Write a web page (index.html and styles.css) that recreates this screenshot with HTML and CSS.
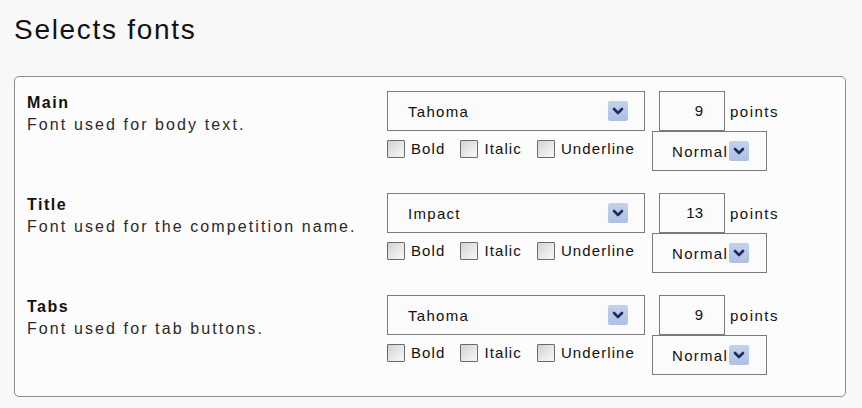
FILE: index.html
```html
<!DOCTYPE html>
<html>
<head>
<meta charset="utf-8">
<link rel="stylesheet" href="styles.css">
</head>
<body>
<h1 class="page-title">Selects fonts</h1>
<div class="panel">
  <div class="font-row">
    <div class="font-info">
      <div class="font-name">Main</div>
      <div class="font-desc">Font used for body text.</div>
    </div>
    <div class="font-controls">
      <div class="controls-top">
        <div class="select family"><span class="select-text">Tahoma</span><span class="arrow"><svg viewBox="0 0 20 20" width="20" height="20"><path d="M6 8 L10 12 L14 8" fill="none" stroke="#1d2d5c" stroke-width="2.6" stroke-linecap="round" stroke-linejoin="round"/></svg></span></div>
        <div class="size-box">9</div>
        <span class="unit">points</span>
      </div>
      <div class="controls-bottom">
        <div class="checks">
          <label class="check"><span class="box"></span>Bold</label>
          <label class="check"><span class="box"></span>Italic</label>
          <label class="check"><span class="box"></span>Underline</label>
        </div>
        <div class="select weight"><span class="select-text">Normal</span><span class="arrow"><svg viewBox="0 0 20 20" width="20" height="20"><path d="M6 8 L10 12 L14 8" fill="none" stroke="#1d2d5c" stroke-width="2.6" stroke-linecap="round" stroke-linejoin="round"/></svg></span></div>
      </div>
    </div>
  </div>

  <div class="font-row">
    <div class="font-info">
      <div class="font-name">Title</div>
      <div class="font-desc">Font used for the competition name.</div>
    </div>
    <div class="font-controls">
      <div class="controls-top">
        <div class="select family"><span class="select-text">Impact</span><span class="arrow"><svg viewBox="0 0 20 20" width="20" height="20"><path d="M6 8 L10 12 L14 8" fill="none" stroke="#1d2d5c" stroke-width="2.6" stroke-linecap="round" stroke-linejoin="round"/></svg></span></div>
        <div class="size-box">13</div>
        <span class="unit">points</span>
      </div>
      <div class="controls-bottom">
        <div class="checks">
          <label class="check"><span class="box"></span>Bold</label>
          <label class="check"><span class="box"></span>Italic</label>
          <label class="check"><span class="box"></span>Underline</label>
        </div>
        <div class="select weight"><span class="select-text">Normal</span><span class="arrow"><svg viewBox="0 0 20 20" width="20" height="20"><path d="M6 8 L10 12 L14 8" fill="none" stroke="#1d2d5c" stroke-width="2.6" stroke-linecap="round" stroke-linejoin="round"/></svg></span></div>
      </div>
    </div>
  </div>

  <div class="font-row">
    <div class="font-info">
      <div class="font-name">Tabs</div>
      <div class="font-desc">Font used for tab buttons.</div>
    </div>
    <div class="font-controls">
      <div class="controls-top">
        <div class="select family"><span class="select-text">Tahoma</span><span class="arrow"><svg viewBox="0 0 20 20" width="20" height="20"><path d="M6 8 L10 12 L14 8" fill="none" stroke="#1d2d5c" stroke-width="2.6" stroke-linecap="round" stroke-linejoin="round"/></svg></span></div>
        <div class="size-box">9</div>
        <span class="unit">points</span>
      </div>
      <div class="controls-bottom">
        <div class="checks">
          <label class="check"><span class="box"></span>Bold</label>
          <label class="check"><span class="box"></span>Italic</label>
          <label class="check"><span class="box"></span>Underline</label>
        </div>
        <div class="select weight"><span class="select-text">Normal</span><span class="arrow"><svg viewBox="0 0 20 20" width="20" height="20"><path d="M6 8 L10 12 L14 8" fill="none" stroke="#1d2d5c" stroke-width="2.6" stroke-linecap="round" stroke-linejoin="round"/></svg></span></div>
      </div>
    </div>
  </div>
</div>
</body>
</html>
```

FILE: styles.css
```css
html, body {
  margin: 0;
  padding: 0;
  background: #f8f8f8;
}

body {
  font-family: "Liberation Sans", Arial, sans-serif;
  color: #1a1a1a;
  padding: 14px 0 0 14px;
}

.page-title {
  margin: 0;
  font-size: 28px;
  font-weight: normal;
  line-height: 32px;
  letter-spacing: 1.7px;
  color: #111;
}

.panel {
  margin-top: 30px;
  box-sizing: border-box;
  width: 832px;
  border: 1px solid #8c8c8c;
  border-radius: 5px;
  background: #fcfcfc;
  padding: 14px 0 21px 12px;
}

.font-row {
  display: flex;
  margin-bottom: 22px;
}

.font-row:last-child {
  margin-bottom: 0;
}

.font-info {
  width: 360px;
  flex: none;
}

.font-name {
  margin-top: 2px;
  font-size: 16px;
  line-height: 19px;
  font-weight: bold;
  letter-spacing: 1.5px;
  color: #111;
}

.font-desc {
  margin-top: 4px;
  font-size: 16px;
  line-height: 18px;
  letter-spacing: 2.1px;
  color: #2a2a2a;
}

.font-controls {
  display: flex;
  flex-direction: column;
}

.controls-top {
  display: flex;
  align-items: center;
  height: 40px;
}

.select {
  display: flex;
  align-items: center;
  justify-content: space-between;
  box-sizing: border-box;
  height: 40px;
  border: 1px solid #7a7a7a;
  background: #fbfbfb;
  font-size: 15px;
  letter-spacing: 1.3px;
  color: #111;
}

.select.family {
  width: 258px;
  padding: 0 16px 0 20px;
}

.select.weight {
  width: 115px;
  padding: 0 17px 0 19px;
}

.arrow {
  display: block;
  width: 20px;
  height: 20px;
  border-radius: 2px;
  background: linear-gradient(#c3d1ec, #adc0e4);
}

.arrow svg {
  display: block;
}

.size-box {
  box-sizing: border-box;
  width: 66px;
  height: 40px;
  margin-left: 14px;
  border: 1px solid #7a7a7a;
  background: #fbfbfb;
  text-align: right;
  padding-right: 21px;
  font-size: 15px;
  line-height: 38px;
  color: #111;
}

.unit {
  margin-left: 5px;
  font-size: 15px;
  letter-spacing: 1.5px;
  color: #111;
}

.controls-bottom {
  display: flex;
  align-items: flex-start;
  height: 40px;
}

.checks {
  width: 265px;
  display: flex;
  padding-top: 9px;
}

.check {
  display: flex;
  align-items: center;
  font-size: 15px;
  letter-spacing: 1.1px;
  line-height: 18px;
  color: #111;
  margin-right: 15px;
}

.check:last-child {
  margin-right: 0;
}

.box {
  display: block;
  box-sizing: border-box;
  width: 18px;
  height: 18px;
  margin-right: 6px;
  border: 1px solid #6a6a6a;
  border-radius: 1px;
  background: linear-gradient(135deg, #d2d2d2 0%, #eeeeee 70%, #f6f6f6 100%);
}
```
